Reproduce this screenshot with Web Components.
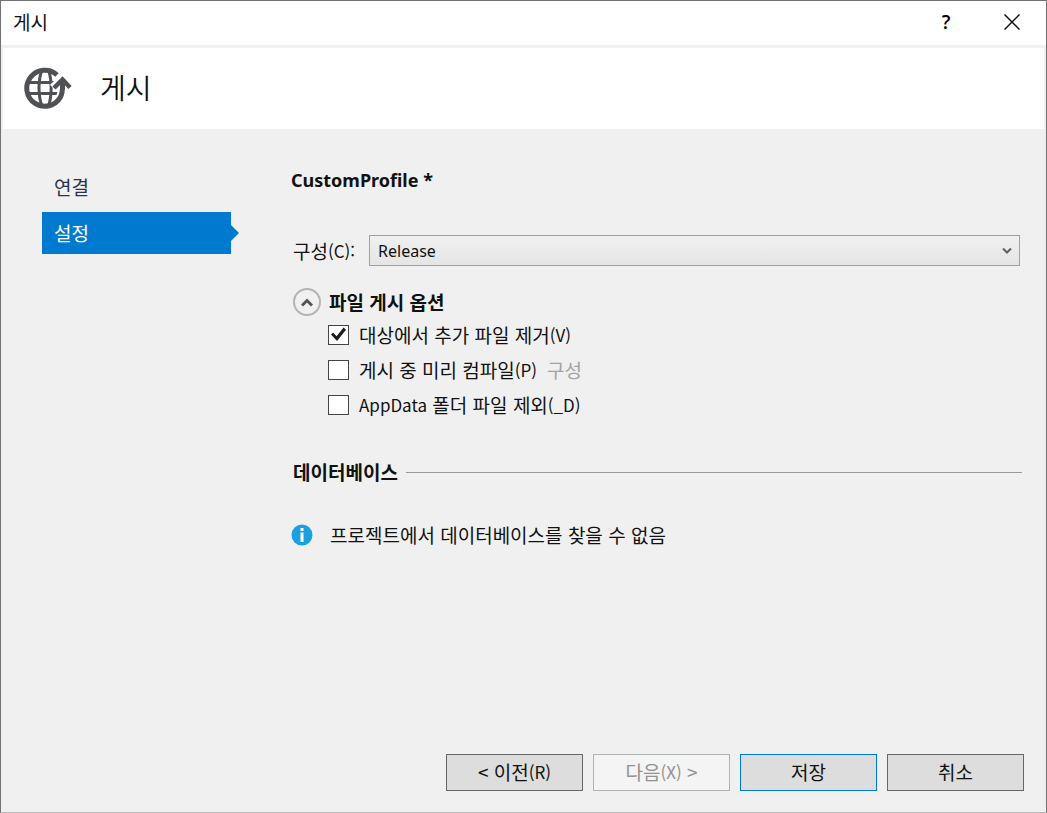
<!DOCTYPE html>
<html lang="ko">
<head>
<meta charset="utf-8">
<meta name="viewport" content="width=device-width, initial-scale=1">
<title>게시</title>
<style>
html, body { margin: 0; background: #f0f0f0; }
body { font: 19px/28px "Noto Sans CJK KR", sans-serif; color: #111; }
</style>
</head>
<body>
<publish-dialog></publish-dialog>
<script>
function define(name, html, setup) {
  const template = document.createElement('template');
  template.innerHTML = '<style>*{box-sizing:border-box} .latin{font-size:17px;line-height:24px;vertical-align:1px}</style>' + html;
  customElements.define(name, class extends HTMLElement {
    constructor() {
      super();
      this.attachShadow({ mode: 'open' }).append(template.content.cloneNode(true));
    }
    connectedCallback() { if (setup) setup(this, this.shadowRoot); }
  });
}

define('title-bar', `
<style>
:host { display: flex; align-items: center; height: 44px; padding: 0 14px 2px 12px; background: #fff; }
span { flex: 1; }
button { display: grid; place-items: center; width: 40px; height: 40px; padding: 0; border: 0; background: none; color: #000; font: 600 19px/28px "Open Sans", sans-serif; }
div { display: flex; gap: 26px; }
</style>
<span><slot></slot></span>
<div>
<button type="button" aria-label="도움말">?</button>
<button type="button" aria-label="닫기"><svg width="16" height="16" viewBox="0 0 16 16" stroke="#111" stroke-width="1.5"><path d="M.5.5 15.5 15.5M15.5.5.5 15.5"/></svg></button>
</div>`);

define('dialog-header', `
<style>
:host { display: flex; align-items: center; gap: 28px; height: 84px; padding: 0 20px 2px; background: #fff; border: solid #f0f0f0; border-width: 3px 2px 0; }
h1 { margin: 0; padding-bottom: 2px; font-size: 28px; line-height: 40px; font-weight: 350; }
</style>
<svg width="49" height="44" viewBox="0 0 49 44" fill="none" stroke="#505155">
<path stroke-width="3" d="M5 16.500H38M5 27.500H36M19 4C15 14 15 30 19 40M25.500 4C29 14 29 30 25.500 40"/>
<path stroke="#fff" stroke-width="10" d="M38 31Q40.500 26 39.500 16M30.500 22.500 39.500 14 47 22"/>
<path stroke-width="5" d="M34 9A18 18 0 1 0 37.500 31Q40 26 39.500 16"/>
<path stroke-width="4.500" d="M31 22 39.500 13.500 47 21.500"/>
</svg>
<h1><slot></slot></h1>`);

define('nav-item', `
<style>
:host { display: block; }
a { display: flex; align-items: center; height: 42px; padding: 0 12px; color: #2b3348; text-decoration: none; }
:host([current]) a { position: relative; background: #007acf; color: #fff; }
:host([current]) a::after { content: ""; position: absolute; left: 100%; top: 13px; border: solid transparent; border-width: 8px 0 8px 8px; border-left-color: #007acf; }
</style>
<a href="#"><slot></slot></a>`);

define('config-select', `
<style>
:host { display: flex; align-items: center; gap: 14px; padding-left: 2px; }
.box { flex: 1; display: grid; align-items: center; }
select { grid-area: 1/1; width: 100%; height: 31px; padding: 0 8px; appearance: none; border: 1px solid #a0a0a0; border-radius: 0; background: linear-gradient(#f0f0f0, #e5e5e5); color: #111; font: 16px/24px "Noto Sans", sans-serif; }
svg { grid-area: 1/1; justify-self: end; margin-right: 8px; pointer-events: none; }
</style>
<label for="config">구성<span class="latin">(C):</span></label>
<div class="box"><select id="config"><option>Release</option></select>
<svg width="10" height="8" viewBox="0 0 10 8" fill="none" stroke="#606060" stroke-width="2"><path d="M1 1.500 5 5.500 9 1.500"/></svg></div>`);

define('check-option', `
<style>
:host { display: flex; align-items: center; gap: 10px; height: 35px; }
input { appearance: none; display: grid; place-items: center; width: 21px; height: 20px; margin: 0; border: 1px solid #444; background: #fff; }
input:checked::before { content: ""; width: 15px; height: 15px; background: #1c1c1c; clip-path: polygon(0 50%, 14% 36%, 37% 62%, 84% 4%, 100% 18%, 40% 94%); }
</style>
<input type="checkbox" id="option"><label for="option"><slot></slot></label><slot name="action"></slot>`,
(host, root) => { root.querySelector('input').checked = host.hasAttribute('checked'); });

define('option-group', `
<style>
:host { display: block; padding-left: 2px; }
header { display: flex; align-items: center; gap: 8px; height: 30px; }
button { display: grid; place-items: center; width: 28px; height: 28px; padding: 0; border: 2px solid #b4b4b4; border-radius: 50%; background: none; }
h3 { margin: 0; font-size: 19px; line-height: 28px; font-weight: 700; }
.items { padding-left: 35px; }
</style>
<header><button type="button" aria-expanded="true" aria-label="접기"><svg width="12" height="9" viewBox="0 0 12 9" fill="none" stroke="#555" stroke-width="3"><path d="M1 7.500 6 2.500 11 7.500"/></svg></button>
<h3><slot name="title"></slot></h3></header>
<div class="items"><slot></slot></div>`);

define('section-title', `
<style>
:host { display: flex; align-items: center; gap: 8px; padding-left: 2px; }
:host::after { content: ""; flex: 1; height: 1px; background: #999; }
h3 { margin: 0; font-size: 19px; line-height: 28px; font-weight: 700; }
</style>
<h3><slot></slot></h3>`);

define('info-message', `
<style>
:host { display: flex; align-items: center; gap: 17px; }
p { margin: 0; }
</style>
<svg width="22" height="22" viewBox="0 0 22 22"><circle cx="11" cy="11" r="10.500" fill="#1ba1e2"/><path fill="#fff" d="M9.500 4h3v3h-3zM9.500 8.500h3V18h-3z"/></svg>
<p><slot></slot></p>`);

define('dialog-button', `
<style>
:host { display: block; width: 137px; }
button { width: 100%; height: 37px; padding: 0 0 2px; border: 1px solid #666; background: #ddd; color: #111; font: inherit; }
:host([primary]) button { border-color: #0078d7; }
button:disabled { border-color: #adb2b5; background: #f4f4f4; color: #929292; }
</style>
<button type="button"><slot></slot></button>`,
(host, root) => { root.querySelector('button').disabled = host.hasAttribute('disabled'); });

define('publish-dialog', `
<style>
:host { display: flex; flex-direction: column; min-height: 100vh; box-sizing: border-box; border: 1px solid #727272; border-bottom-color: #b8b8b8; background: #f0f0f0; }
.body { flex: 1; display: flex; gap: 60px; padding: 37px 24px 0 41px; }
nav { display: grid; align-content: start; gap: 4px; width: 189px; }
main { flex: 1; min-width: 0; }
h2 { margin: 0 0 41px; font: 700 18px/28px "Noto Sans", sans-serif; }
config-select { height: 31px; margin-right: 2px; }
option-group { margin-top: 21px; }
section-title { margin-top: 36px; }
info-message { margin-top: 35px; }
a { color: #a3a3a3; text-decoration: none; }
footer { display: flex; justify-content: flex-end; flex-wrap: wrap; gap: 10px; padding: 20px 22px 21px; }
</style>
<title-bar>게시</title-bar>
<dialog-header>게시</dialog-header>
<div class="body">
<nav><nav-item>연결</nav-item><nav-item current>설정</nav-item></nav>
<main>
<h2>CustomProfile *</h2>
<config-select></config-select>
<option-group><span slot="title">파일 게시 옵션</span>
<check-option checked>대상에서 추가 파일 제거<span class="latin">(V)</span></check-option>
<check-option>게시 중 미리 컴파일<span class="latin">(P)</span><a slot="action" href="#">구성</a></check-option>
<check-option><span class="latin">AppData</span> 폴더 파일 제외<span class="latin">(_D)</span></check-option>
</option-group>
<section-title>데이터베이스</section-title>
<info-message>프로젝트에서 데이터베이스를 찾을 수 없음</info-message>
</main>
</div>
<footer><dialog-button>&lt; 이전<span class="latin">(R)</span></dialog-button><dialog-button disabled>다음<span class="latin">(X)</span> &gt;</dialog-button><dialog-button primary>저장</dialog-button><dialog-button>취소</dialog-button></footer>`);
</script>
</body>
</html>
